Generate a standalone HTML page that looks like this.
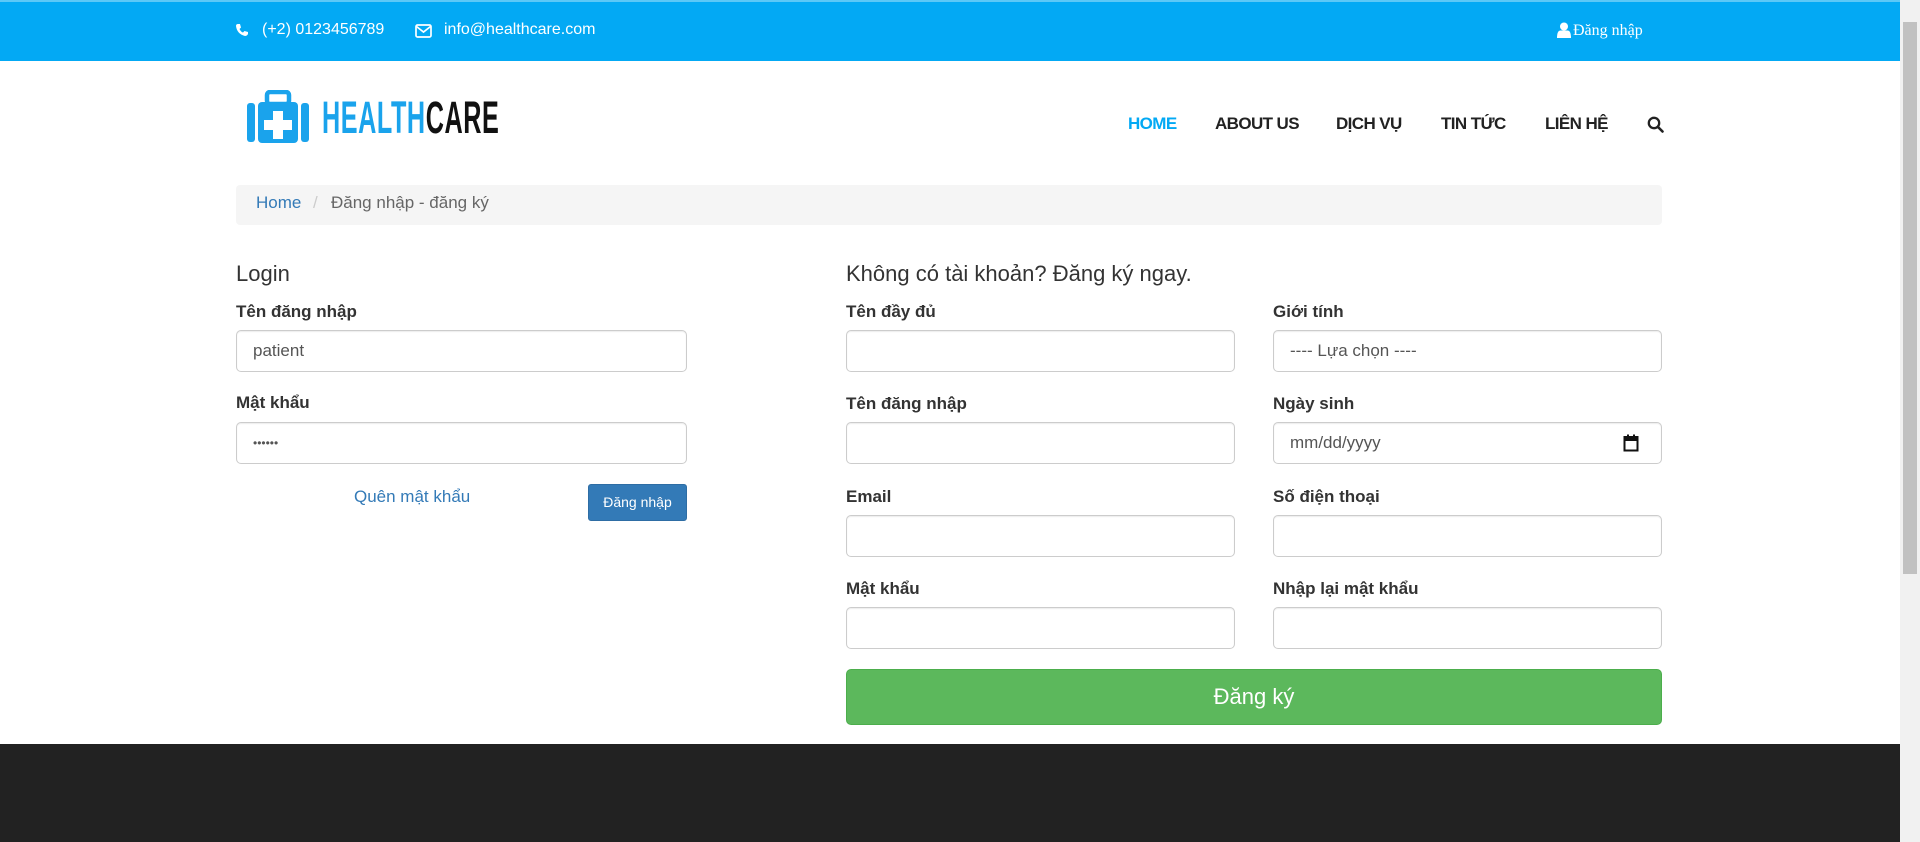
<!DOCTYPE html>
<html><head><meta charset="utf-8">
<style>
*{box-sizing:border-box;margin:0;padding:0}
body{width:1920px;height:842px;overflow:hidden;background:#fff;font-family:"Liberation Sans",sans-serif;color:#333;position:relative}
.a{position:absolute;white-space:nowrap}
.top{left:0;top:0;width:1900px;height:61px;background:#03a9f4;border-top:2px solid #5cc8f7}
.tw{color:#fff;font-size:16px}
.scroll{left:1900px;top:0;width:20px;height:842px;background:#f1f1f1}
.thumb{left:1903px;top:22px;width:14px;height:552px;background:#c1c1c1}
.nav{font-size:17px;font-weight:bold;color:#222;top:114px;letter-spacing:-0.6px}
.bc{left:236px;top:185px;width:1426px;height:40px;background:#f5f5f5;border-radius:4px}
.lbl{font-size:17px;font-weight:bold;color:#333}
.inp{border:1px solid #ccc;border-radius:5px;height:42px;background:#fff;box-shadow:inset 0 1px 1px rgba(0,0,0,.075);font-size:17px;color:#555;padding:10px 16px}
h3{font-weight:normal;font-size:22px;color:#333}
</style></head><body>
<div class="a top"></div>
<svg class="a" style="left:235px;top:23px" width="14" height="14" viewBox="0 0 14 14"><path d="M3 1 L5 1 L6 4.5 L4.5 6 Q6 9 8 9.5 L9.5 8 L13 9 L13 11 Q12 13 10 13 Q2 11 1 3 Q1 1 3 1Z" fill="#fff"/></svg>
<div class="a tw" style="left:262px;top:21px">(+2) 0123456789</div>
<svg class="a" style="left:415px;top:24px" width="17" height="14" viewBox="0 0 17 14"><rect x="1" y="1" width="15" height="12" rx="1.5" fill="none" stroke="#fff" stroke-width="1.7"/><path d="M1.5 2.5 L8.5 8 L15.5 2.5" fill="none" stroke="#fff" stroke-width="1.7"/></svg>
<div class="a tw" style="left:444px;top:21px">info@healthcare.com</div>
<svg class="a" style="left:1557px;top:22px" width="14" height="16" viewBox="0 0 14 16"><circle cx="7" cy="4.5" r="4" fill="#fff"/><path d="M0 16 Q0 8 4 8.5 L10 8.5 Q14 8 14 16Z" fill="#fff"/></svg>
<div class="a" style="left:1573px;top:22px;color:#fff;font-family:'Liberation Serif',serif;font-size:16px">Đăng nhập</div>
<div class="a scroll"></div><div class="a thumb"></div>

<svg class="a" style="left:247px;top:90px" width="62" height="53" viewBox="0 0 62 53"><rect x="20" y="2" width="22" height="12" rx="3" fill="none" stroke="#1aa3ec" stroke-width="4.5"/><rect x="0" y="13" width="8" height="39" rx="3" fill="#1aa3ec"/><rect x="54" y="13" width="8" height="39" rx="3" fill="#1aa3ec"/><rect x="11" y="12" width="40" height="41" rx="4" fill="#1aa3ec"/><path d="M26 21h10v9h9v10h-9v9h-10v-9h-9v-10h9z" fill="#fff"/></svg>
<div class="a" style="left:322px;top:92px;font-size:45px;font-weight:bold;transform:scaleX(0.56);transform-origin:left top;letter-spacing:1px"><span style="color:#1aa3ec">HEALTH</span><span style="color:#111">CARE</span></div>

<div class="a nav" style="left:1128px;color:#03a9f4">HOME</div>
<div class="a nav" style="left:1215px">ABOUT US</div>
<div class="a nav" style="left:1336px">DỊCH VỤ</div>
<div class="a nav" style="left:1441px">TIN TỨC</div>
<div class="a nav" style="left:1545px">LIÊN HỆ</div>
<svg class="a" style="left:1647px;top:116px" width="17" height="17" viewBox="0 0 17 17"><circle cx="7" cy="7" r="5.2" fill="none" stroke="#222" stroke-width="2.3"/><path d="M11 11 L15.5 15.5" stroke="#222" stroke-width="2.6" stroke-linecap="round"/></svg>

<div class="a bc"></div>
<div class="a" style="left:256px;top:193px;font-size:17px;color:#337ab7">Home</div>
<div class="a" style="left:313px;top:193px;font-size:17px;color:#ccc">/</div>
<div class="a" style="left:331px;top:193px;font-size:17px;color:#666">Đăng nhập - đăng ký</div>

<h3 class="a" style="left:236px;top:261px">Login</h3>
<div class="a lbl" style="left:236px;top:302px">Tên đăng nhập</div>
<div class="a inp" style="left:236px;top:330px;width:451px">patient</div>
<div class="a lbl" style="left:236px;top:393px">Mật khẩu</div>
<div class="a inp" style="left:236px;top:422px;width:451px;font-size:12px;padding-top:13px">••••••</div>
<div class="a" style="left:354px;top:487px;font-size:17px;color:#337ab7">Quên mật khẩu</div>
<div class="a" style="left:588px;top:484px;width:99px;height:37px;background:#337ab7;border:1px solid #2e6da4;border-radius:3px;color:#fff;font-size:14px;text-align:center;line-height:35px">Đăng nhập</div>

<h3 class="a" style="left:846px;top:261px">Không có tài khoản? Đăng ký ngay.</h3>
<div class="a lbl" style="left:846px;top:302px">Tên đầy đủ</div>
<div class="a inp" style="left:846px;top:330px;width:389px"></div>
<div class="a lbl" style="left:1273px;top:302px">Giới tính</div>
<div class="a inp" style="left:1273px;top:330px;width:389px">---- Lựa chọn ----</div>
<div class="a lbl" style="left:846px;top:394px">Tên đăng nhập</div>
<div class="a inp" style="left:846px;top:422px;width:389px"></div>
<div class="a lbl" style="left:1273px;top:394px">Ngày sinh</div>
<div class="a inp" style="left:1273px;top:422px;width:389px">mm/dd/yyyy</div>
<svg class="a" style="left:1623px;top:434px" width="16" height="18" viewBox="0 0 16 18"><rect x="1.5" y="3" width="13" height="13.5" fill="none" stroke="#111" stroke-width="2"/><rect x="1.5" y="3" width="13" height="4" fill="#111"/><rect x="4" y="0.5" width="2" height="3" fill="#111"/><rect x="10" y="0.5" width="2" height="3" fill="#111"/></svg>
<div class="a lbl" style="left:846px;top:487px">Email</div>
<div class="a inp" style="left:846px;top:515px;width:389px"></div>
<div class="a lbl" style="left:1273px;top:487px">Số điện thoại</div>
<div class="a inp" style="left:1273px;top:515px;width:389px"></div>
<div class="a lbl" style="left:846px;top:579px">Mật khẩu</div>
<div class="a inp" style="left:846px;top:607px;width:389px"></div>
<div class="a lbl" style="left:1273px;top:579px">Nhập lại mật khẩu</div>
<div class="a inp" style="left:1273px;top:607px;width:389px"></div>
<div class="a" style="left:846px;top:669px;width:816px;height:56px;background:#5cb85c;border:1px solid #4cae4c;border-radius:5px;color:#fff;font-size:22px;text-align:center;line-height:53px">Đăng ký</div>

<div class="a" style="left:0;top:744px;width:1900px;height:98px;background:#222"></div>
</body></html>
